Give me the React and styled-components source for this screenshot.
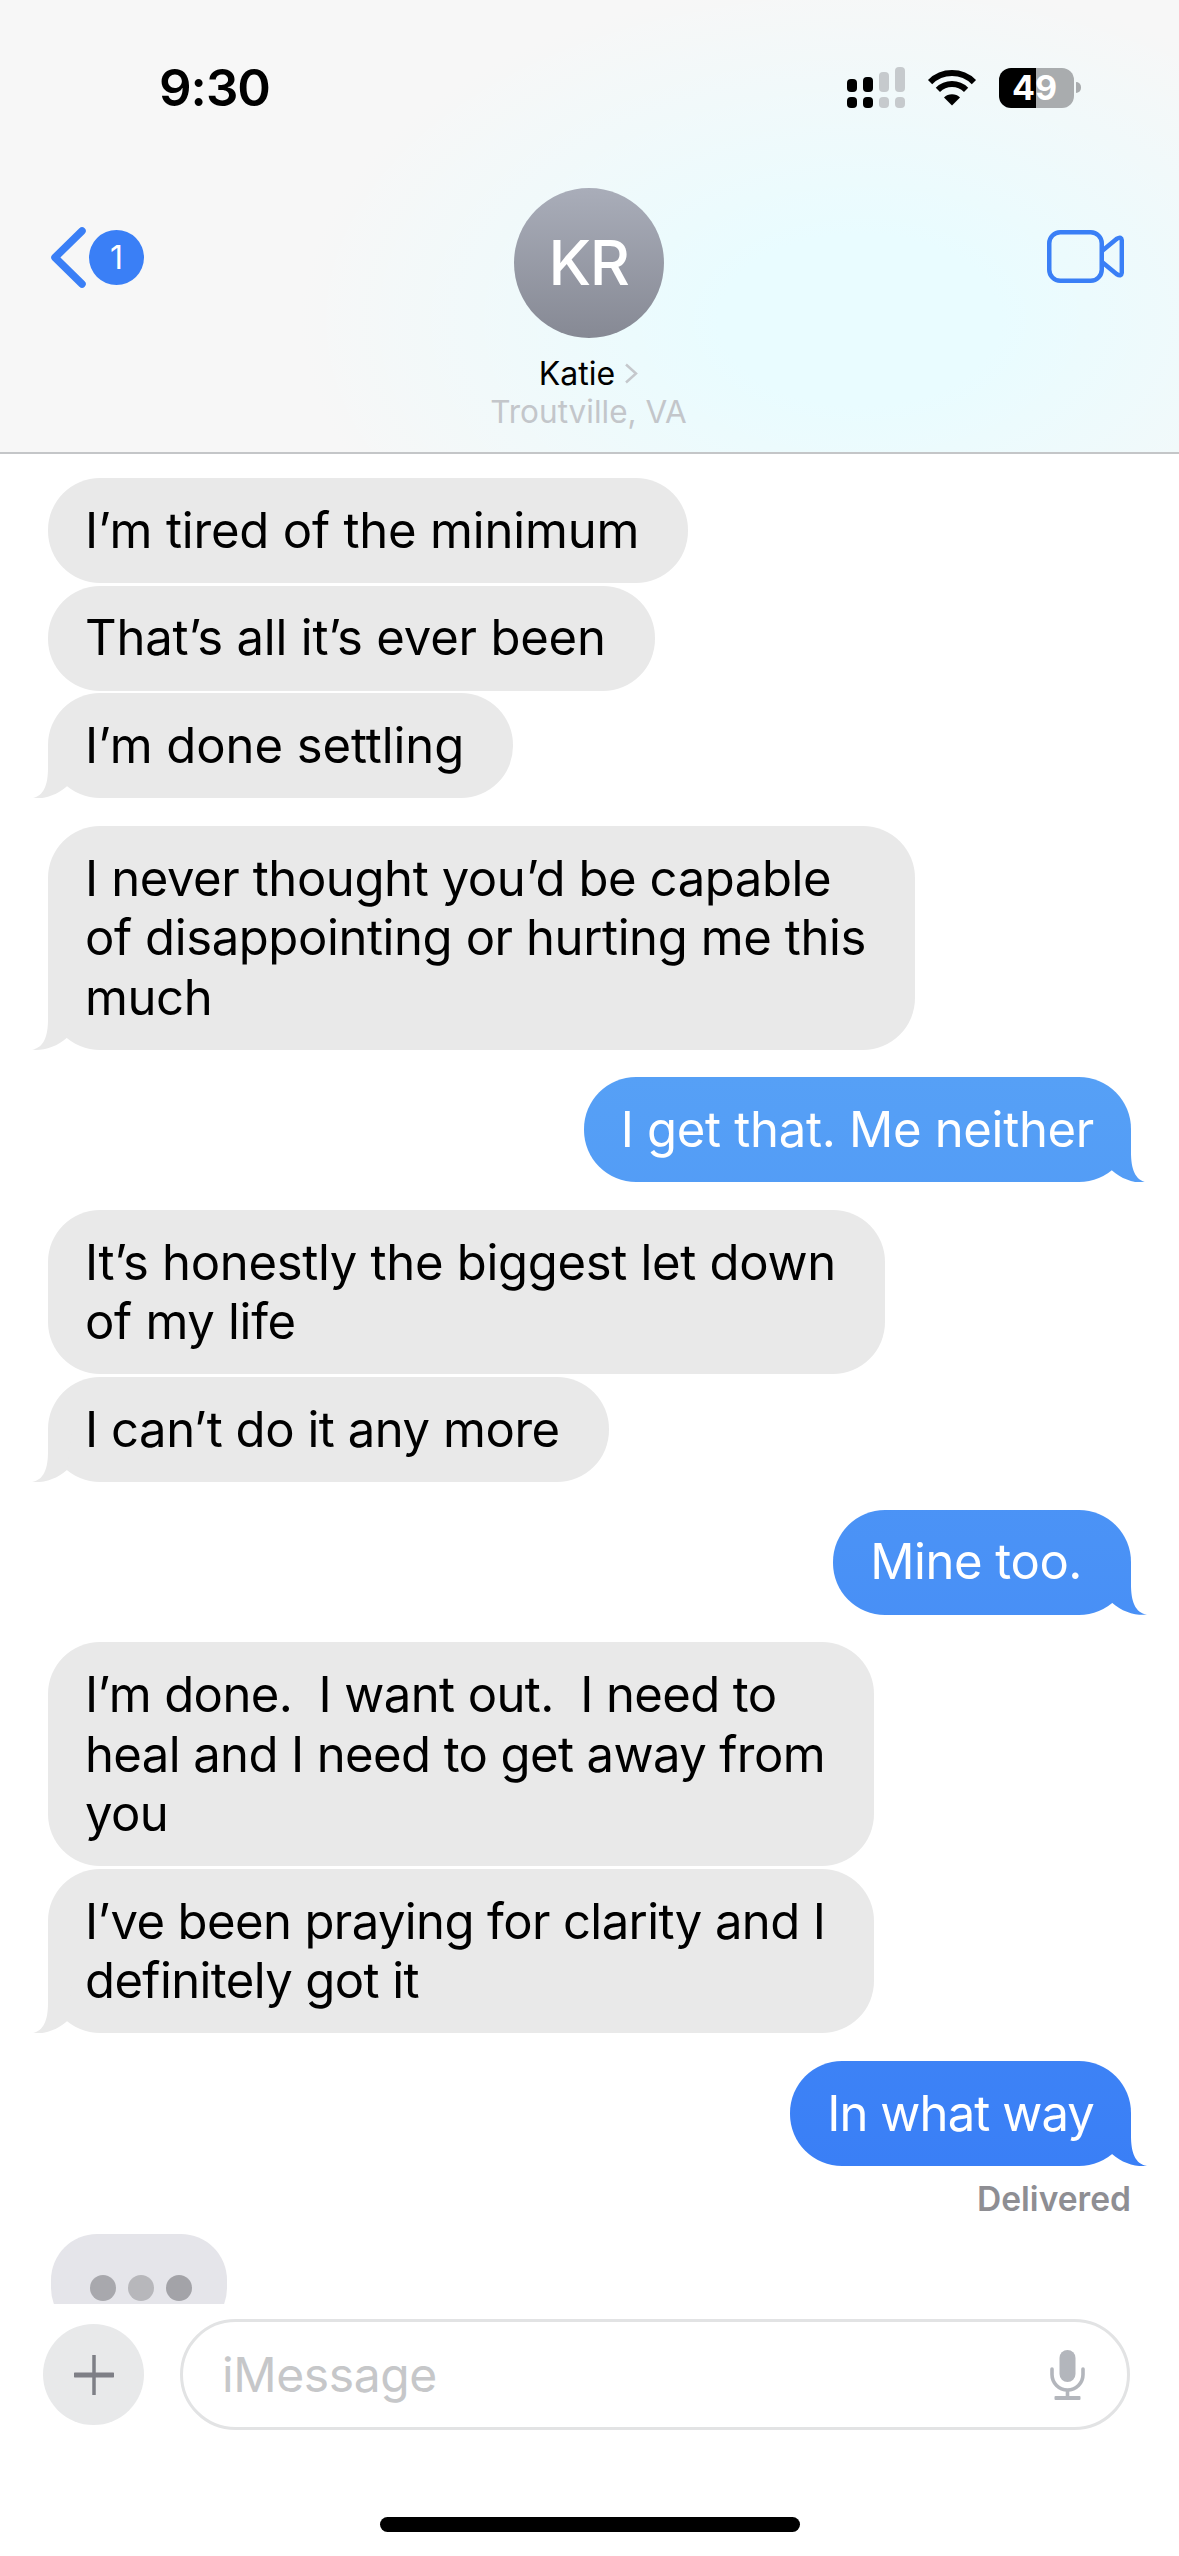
import styled, { createGlobalStyle } from "styled-components";

const messages = [
  { text: "I’m tired of the minimum", tracking: -0.18 },
  { text: "That’s all it’s ever been", tracking: -0.19 },
  { text: "I’m done settling", tail: true, tracking: -0.07 },
  { text: "I never thought you’d be capable\nof disappointing or hurting me this\nmuch", tail: true, newGroup: true, tracking: -0.4 },
  { text: "I get that. Me neither", mine: true, tail: true, newGroup: true, tracking: -0.3 },
  { text: "It’s honestly the biggest let down\nof my life", newGroup: true, tracking: -0.3 },
  { text: "I can’t do it any more", tail: true, tracking: -0.45 },
  { text: "Mine too.", mine: true, tail: true, newGroup: true, wideEnd: true, tracking: -0.45 },
  { text: "I’m done.  I want out.  I need to\nheal and I need to get away from\nyou", newGroup: true, tracking: -0.6 },
  { text: "I’ve been praying for clarity and I\ndefinitely got it", tail: true, tracking: -0.6 },
  { text: "In what way", mine: true, tail: true, newGroup: true, tracking: -0.9 },
];

export default function App() {
  return (
    <>
      <GlobalStyle />
      <Screen>
        <Header>
          <StatusBar>
            <Time>9:30</Time>
            <StatusIcons>
              <Signal>
                {[13, 15, 20, 25].map((height, i) => (
                  <SignalColumn key={height} $on={i < 2}>
                    <SignalBar $height={height} />
                    <SignalDot />
                  </SignalColumn>
                ))}
              </Signal>
              <svg width="50" height="37" viewBox="0 0 50 37">
                <path d="M3.1 13.1A31 31 0 0 1 46.9 13.1" fill="none" stroke="#000" strokeWidth="6" />
                <path d="M10.9 20.9A20 20 0 0 1 39.1 20.9" fill="none" stroke="#000" strokeWidth="6" />
                <path d="M25 36.5L17 28.5A11.3 11.3 0 0 1 33 28.5Z" fill="#000" />
              </svg>
              <Battery>
                <BatteryBody>49</BatteryBody>
                <BatteryNub />
              </Battery>
            </StatusIcons>
          </StatusBar>

          <Nav>
            <BackButton>
              <svg width="35" height="61" viewBox="0 0 35 61">
                <path d="M31 4L4 30.5L31 57" fill="none" stroke="#3a7ff6" strokeWidth="7.5" strokeLinecap="round" strokeLinejoin="round" />
              </svg>
              <Badge>1</Badge>
            </BackButton>

            <Contact>
              <Avatar>KR</Avatar>
              <NameRow>
                Katie
                <svg width="14" height="21" viewBox="0 0 14 21">
                  <path d="M2 1.5L12 10.5L2 19.5" fill="none" stroke="#c5c8cc" strokeWidth="2.5" />
                </svg>
              </NameRow>
              <Location>Troutville, VA</Location>
            </Contact>

            <VideoButton>
              <svg width="77" height="53" viewBox="0 0 77 53">
                <rect x="2.25" y="2.25" width="52.5" height="48.5" rx="11" fill="none" stroke="#3a7ff6" strokeWidth="4.5" />
                <path d="M55 21L69.5 9Q74.8 5.5 74.8 11V42Q74.8 47.5 69.5 44L55 32" fill="none" stroke="#3a7ff6" strokeWidth="4.5" strokeLinejoin="round" />
              </svg>
            </VideoButton>
          </Nav>
        </Header>

        <Thread>
          {messages.map((message) => (
            <Bubble
              key={message.text}
              $mine={message.mine}
              $tail={message.tail}
              $newGroup={message.newGroup}
              $wideEnd={message.wideEnd}
              $tracking={message.tracking}
            >
              {message.text}
            </Bubble>
          ))}
          <Delivered>Delivered</Delivered>
          <Typing>
            <TypingDot $color="#a8a8ad" />
            <TypingDot $color="#b7b7bb" />
            <TypingDot $color="#a3a3a8" />
          </Typing>
        </Thread>

        <Footer>
          <Composer>
            <PlusButton>
              <svg width="40" height="40" viewBox="0 0 40 40">
                <path d="M20 0.5V39.5" stroke="#7e7f86" strokeWidth="3.5" strokeLinecap="round" />
                <path d="M1 20H39" stroke="#7e7f86" strokeWidth="5" strokeLinecap="round" />
              </svg>
            </PlusButton>
            <InputBox>
              <Placeholder>iMessage</Placeholder>
              <svg width="35" height="50" viewBox="0 0 35 50">
                <rect x="9.5" y="0" width="16" height="32" rx="8" fill="#b3b6bc" />
                <path d="M2 19V24.5A15.5 15.5 0 0 0 33 24.5V19" fill="none" stroke="#b3b6bc" strokeWidth="3.6" strokeLinecap="round" />
                <path d="M17.5 40V47" stroke="#b3b6bc" strokeWidth="3.6" />
                <rect x="4.5" y="46" width="26" height="4" rx="1" fill="#b3b6bc" />
              </svg>
            </InputBox>
          </Composer>
          <HomeBar />
        </Footer>
      </Screen>
    </>
  );
}

const GlobalStyle = createGlobalStyle`
  html, body {
    margin: 0;
    padding: 0;
    background: #fff;
  }
`;

const Screen = styled.div`
  width: 1179px;
  height: 2556px;
  display: flex;
  flex-direction: column;
  overflow: hidden;
  background: #fff;
  font-family: Inter, "Liberation Sans", sans-serif;
`;

const Header = styled.header`
  flex: none;
  height: 454px;
  box-sizing: border-box;
  padding-top: 67px;
  border-bottom: 2px solid #c4c6c8;
  background:
    radial-gradient(ellipse 560px 340px at 860px 320px, #e9fcff 25%, rgba(233, 252, 255, 0) 100%),
    #f7f7f7;
`;

const StatusBar = styled.div`
  display: flex;
  justify-content: space-between;
  align-items: center;
  height: 41px;
  padding: 0 98px 0 159px;
`;

const Time = styled.div`
  font-size: 51px;
  font-weight: 600;
  letter-spacing: -1px;
  color: #000;
`;

const StatusIcons = styled.div`
  display: flex;
  align-items: center;
  gap: 22px;
`;

const Signal = styled.div`
  display: flex;
  align-items: flex-end;
  gap: 6px;
`;

const SignalColumn = styled.div`
  display: flex;
  flex-direction: column;
  gap: 5px;
  color: ${(p) => (p.$on ? "#000" : "#c6cacd")};
`;

const SignalBar = styled.div`
  width: 10px;
  height: ${(p) => p.$height}px;
  border-radius: 4px;
  background: currentColor;
`;

const SignalDot = styled.div`
  width: 10px;
  height: 11px;
  border-radius: 4px;
  background: currentColor;
`;

const Battery = styled.div`
  display: flex;
  align-items: center;
  gap: 2px;
`;

const BatteryBody = styled.div`
  width: 75px;
  height: 40px;
  box-sizing: border-box;
  padding-left: 13px;
  border-radius: 12px;
  background: linear-gradient(90deg, #000 37px, #a9acae 37px);
  color: #fff;
  font-size: 34px;
  font-weight: 700;
  line-height: 40px;
`;

const BatteryNub = styled.div`
  width: 5px;
  height: 11px;
  border-radius: 0 5px 5px 0;
  background: #a9acae;
`;

const Nav = styled.div`
  display: grid;
  grid-template-columns: 1fr auto 1fr;
  margin-top: 80px;
  padding: 0 55px 0 51px;
`;

const BackButton = styled.div`
  display: flex;
  align-items: center;
  gap: 3px;
  margin-top: 39px;
  height: 61px;
`;

const Badge = styled.div`
  width: 55px;
  height: 55px;
  border-radius: 50%;
  background: #3a7ff6;
  color: #fff;
  font-size: 32px;
  line-height: 55px;
  text-align: center;
`;

const Contact = styled.div`
  display: flex;
  flex-direction: column;
  align-items: center;
  margin-left: 2px;
`;

const Avatar = styled.div`
  width: 150px;
  height: 150px;
  border-radius: 50%;
  background: linear-gradient(180deg, #a9adb9, #868994);
  color: #fff;
  font-size: 62px;
  font-weight: 500;
  letter-spacing: -1.5px;
  line-height: 150px;
  text-align: center;
`;

const NameRow = styled.div`
  display: flex;
  align-items: center;
  gap: 9px;
  margin-top: 17px;
  height: 36px;
  font-size: 32px;
  color: #000;
`;

const Location = styled.div`
  margin-top: 3px;
  font-size: 31.5px;
  line-height: 36px;
  color: #c3c6ca;
`;

const VideoButton = styled.div`
  justify-self: end;
  margin-top: 42px;
`;

const Thread = styled.main`
  flex: 1;
  min-height: 0;
  overflow: hidden;
  display: flex;
  flex-direction: column;
  padding: 24px 48px 0;
`;

const Bubble = styled.div`
  position: relative;
  align-self: ${(p) => (p.$mine ? "flex-end" : "flex-start")};
  margin-top: ${(p) => (p.$newGroup ? "27.6px" : "2.6px")};
  &:first-child {
    margin-top: 0;
  }
  padding: 22.75px ${(p) => (p.$mine && !p.$wideEnd ? "37px" : "49px")} 22.75px 37px;
  border-radius: 52px;
  font-size: 49px;
  line-height: 59.5px;
  letter-spacing: ${(p) => p.$tracking}px;
  white-space: pre;
  color: ${(p) => (p.$mine ? "#fff" : "#000")};
  background: ${(p) =>
    p.$mine
      ? "linear-gradient(180deg, #56a0f6 1077px, #3a7ff6 2167px) fixed"
      : "#e9e9e9"};

  &::after {
    content: ${(p) => (p.$tail ? '""' : "none")};
    position: absolute;
    bottom: 0;
    ${(p) => (p.$mine ? "right: -16px;" : "left: -16px;")}
    width: 40px;
    height: 52px;
    background: inherit;
    background-attachment: ${(p) => (p.$mine ? "fixed" : "scroll")};
    clip-path: ${(p) =>
      p.$mine
        ? "path('M24 0L24 22C24 38 28 50 40 52C28 53 15 49 5 40L0 0Z')"
        : "path('M16 0L16 22C16 38 12 50 0 52C12 53 25 49 35 40L40 0Z')"};
  }
`;

const Delivered = styled.div`
  align-self: flex-end;
  margin-top: 15px;
  font-size: 33.6px;
  font-weight: 600;
  line-height: 36px;
  color: #8e8e93;
`;

const Typing = styled.div`
  flex: none;
  display: flex;
  gap: 12px;
  width: 176px;
  height: 100px;
  box-sizing: border-box;
  margin: 17px 0 0 3px;
  padding: 41px 0 0 39px;
  border-radius: 46px;
  background: #e5e5ea;
`;

const TypingDot = styled.div`
  width: 26px;
  height: 26px;
  border-radius: 50%;
  background: ${(p) => p.$color};
`;

const Footer = styled.footer`
  flex: none;
  height: 252px;
  box-sizing: border-box;
  padding-top: 15px;
  background: #fff;
`;

const Composer = styled.div`
  display: flex;
  align-items: center;
  gap: 36px;
  padding: 0 49px 0 43px;
`;

const PlusButton = styled.div`
  flex: none;
  width: 101px;
  height: 101px;
  border-radius: 50%;
  background: #e8e9ea;
  display: flex;
  align-items: center;
  justify-content: center;
`;

const InputBox = styled.div`
  flex: 1;
  height: 111px;
  box-sizing: border-box;
  display: flex;
  align-items: center;
  justify-content: space-between;
  padding: 0 42px 0 39px;
  border: 3px solid #e2e3e4;
  border-radius: 56px;
  background: #fff;
`;

const Placeholder = styled.div`
  font-size: 48px;
  letter-spacing: -0.4px;
  color: #c6c7c9;
`;

const HomeBar = styled.div`
  width: 420px;
  height: 15px;
  margin: 87px auto 0;
  border-radius: 8px;
  background: #000;
`;
